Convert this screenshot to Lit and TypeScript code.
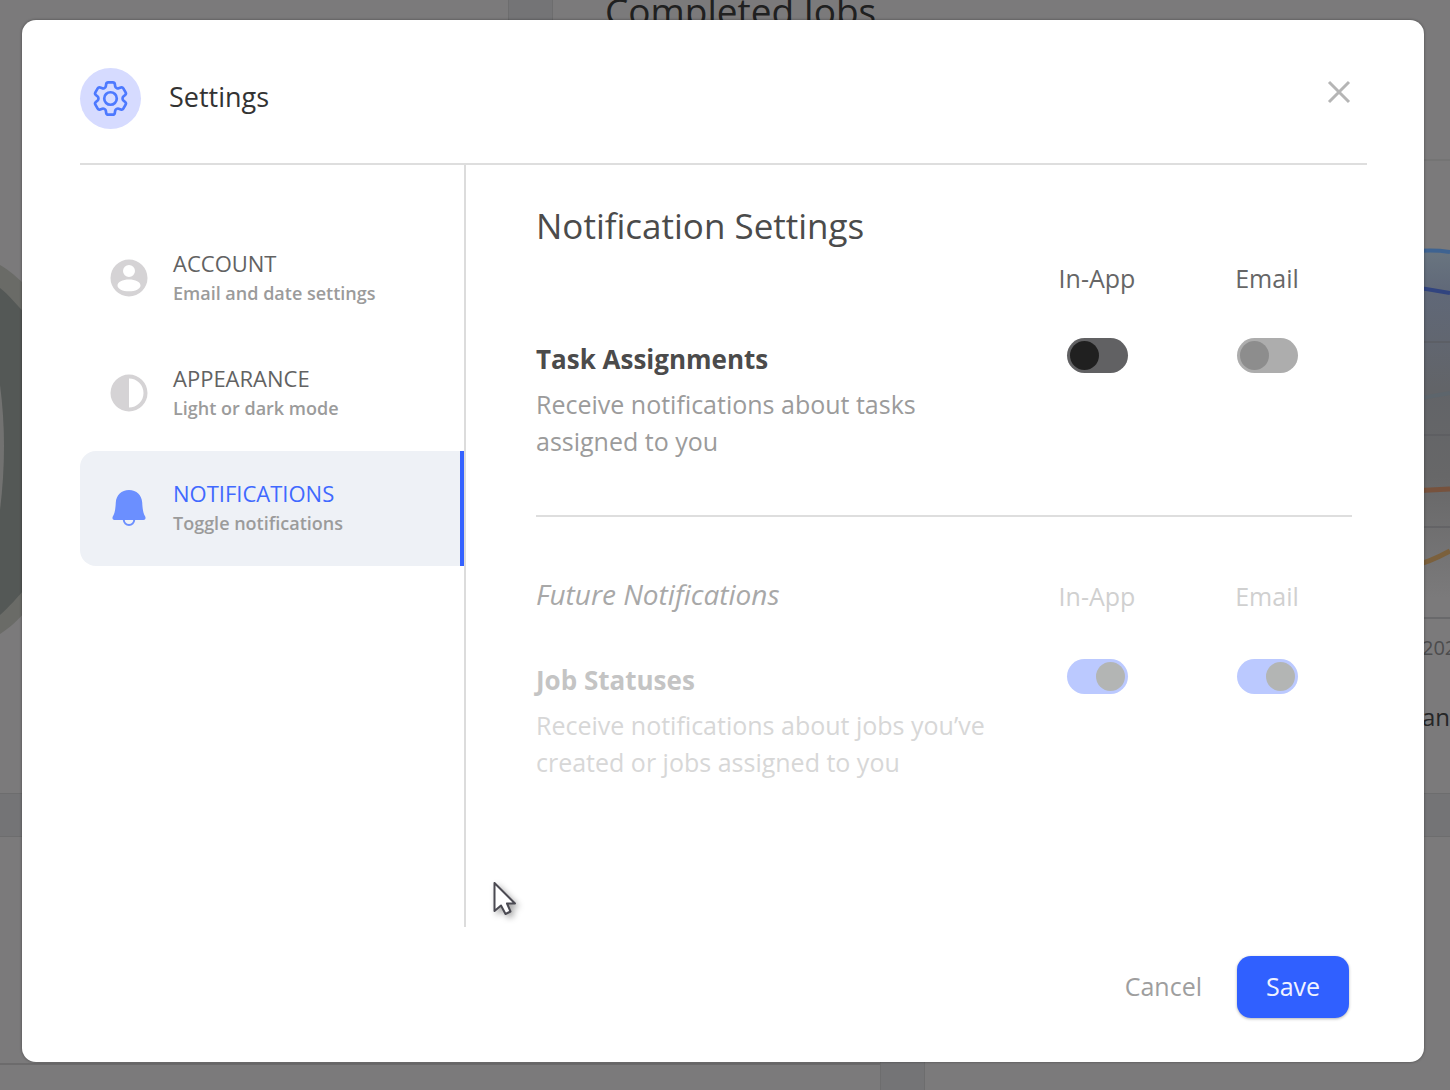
import { LitElement, html, css, svg, nothing } from "lit";
import { customElement, property } from "lit/decorators.js";
import { classMap } from "lit/directives/class-map.js";

interface NavEntry {
  id: string;
  title: string;
  hint: string;
}

const NAV: NavEntry[] = [
  { id: "account", title: "ACCOUNT", hint: "Email and date settings" },
  { id: "appearance", title: "APPEARANCE", hint: "Light or dark mode" },
  { id: "notifications", title: "NOTIFICATIONS", hint: "Toggle notifications" },
];

const NAV_ICONS: Record<string, unknown> = {
  account: svg`<path fill-rule="evenodd" d="M19 0.500a18.500 18.500 0 1 0 0 37a18.500 18.500 0 1 0 0-37zM19 6a6 6 0 1 1 0 12a6 6 0 1 1 0-12zM19 20.500c6.400 0 11.500 2.500 11.500 5.900c0 3.200-5.100 5.900-11.500 5.900s-11.500-2.700-11.500-5.900c0-3.400 5.100-5.900 11.500-5.900z"/>`,
  appearance: svg`<path fill-rule="evenodd" d="M19 0.500a18.500 18.500 0 1 0 0 37a18.500 18.500 0 1 0 0-37zM19 4.500a14.500 14.500 0 0 1 0 29z"/>`,
  notifications: svg`<path d="M19 1c7.600 0 12.700 5 13.200 12.600c0.400 7 1 10.800 3 14c0.900 2-0.100 3.400-1.700 3.400H4.500c-1.600 0-2.600-1.400-1.700-3.400c2-3.200 2.600-7 3-14C6.300 6 11.400 1 19 1z"/><path d="M13.700 30.500c0.200 3.400 2.600 5.400 5.300 5.400s5.100-2 5.300-5.400" fill="none" stroke="currentColor" stroke-width="2"/>`,
};

/** The dimmed dashboard that shows round the edges of the dialog. */
@customElement("dashboard-backdrop")
export class DashboardBackdrop extends LitElement {
  static styles = css`
    :host {
      position: absolute;
      inset: 0;
      overflow: hidden;
      display: flex;
      flex-direction: column;
      gap: 44px;
      background: #747476;
      font-family: "Open Sans", "Noto Sans", sans-serif;
    }
    .row {
      display: grid;
      gap: 45px;
      min-height: 0;
    }
    .upper {
      flex: 793 0 0;
      grid-template-columns: 508px 1fr;
    }
    .lower {
      flex: 253 0 0;
      grid-template-columns: 880px 1fr;
    }
    .card {
      background: #7b7a7b;
      outline: 1px solid #6d6d6e;
      overflow: hidden;
      position: relative;
    }
    .heading {
      margin: 0;
      padding-left: 52px;
      margin-top: -12px;
      font-size: 37px;
      line-height: 46px;
      font-weight: 400;
      color: #1f2020;
    }
    .donut {
      position: absolute;
      left: 0;
      top: 250px;
    }
    .chart {
      position: absolute;
      right: 0;
      top: 150px;
    }
    .tick,
    .legend {
      position: absolute;
      right: 0;
    }
    .tick {
      top: 634px;
      width: 28px;
      font-size: 20px;
      line-height: 28px;
      color: #4c4c4d;
    }
    .legend {
      top: 700px;
      width: 28px;
      font-size: 24px;
      line-height: 34px;
      color: #252627;
    }
    .rule {
      margin-top: 226px;
      border-top: 2px solid #6c6b6c;
    }
  `;

  render() {
    return html`
      <div class="row upper">
        <div class="card">
          <svg class="donut" width="30" height="400" viewBox="0 250 30 400" aria-hidden="true">
            <path d="M0 265C9 270 17 277 30 290V606C17 622 9 628 0 634z" fill="#6a6b67" />
            <path d="M0 288C9 295 17 305 30 319V583C17 598 9 607 0 615z" fill="#545856" />
            <path d="M0 385Q8 445 0 510z" fill="#727271" />
          </svg>
        </div>
        <div class="card">
          <h2 class="heading">Completed Jobs</h2>
          <svg class="chart" width="40" height="480" viewBox="0 150 40 480" aria-hidden="true">
            <defs>
              <linearGradient id="area" x1="0" y1="0" x2="0" y2="1">
                <stop offset="0" stop-color="#697580" />
                <stop offset="0.120" stop-color="#606878" />
                <stop offset="0.400" stop-color="#626468" />
                <stop offset="0.650" stop-color="#676768" />
                <stop offset="1" stop-color="#7b7a7b" />
              </linearGradient>
            </defs>
            <path d="M0 160H40" stroke="#6f6e6f" stroke-width="1" />
            <path d="M0 251H40V598H0z" fill="url(#area)" />
            <path d="M0 342H40M0 435H40M0 527H40M0 618H40" stroke="#58595c" stroke-width="1" />
            <path d="M0 252Q20 249 40 252" fill="none" stroke="#3e6391" stroke-width="4" />
            <path d="M0 287Q20 289 40 293" fill="none" stroke="#31447f" stroke-width="4" />
            <path d="M0 400L40 393" stroke="#5d656c" stroke-width="4" />
            <path d="M0 491L40 489" stroke="#77523d" stroke-width="5" />
            <path d="M0 567Q18 563 40 551" fill="none" stroke="#7b603c" stroke-width="5" />
          </svg>
          <span class="tick">202</span>
          <span class="legend">an</span>
        </div>
      </div>
      <div class="row lower">
        <div class="card"><div class="rule"></div></div>
        <div class="card"></div>
      </div>
    `;
  }
}

/** On/off switch built on a native checkbox. */
@customElement("toggle-switch")
export class ToggleSwitch extends LitElement {
  @property() name = "";
  @property() tone = "dark";
  @property({ type: Boolean }) on = false;
  @property({ type: Boolean }) locked = false;

  static styles = css`
    :host {
      display: flex;
    }
    .switch {
      appearance: none;
      display: flex;
      align-items: center;
      box-sizing: border-box;
      width: 61px;
      height: 35px;
      margin: 0;
      padding: 3px;
      border-radius: 18px;
      background: #616163;
      cursor: pointer;
    }
    .switch::before {
      content: "";
      width: 29px;
      height: 29px;
      border-radius: 50%;
      background: #202020;
    }
    .switch.muted {
      background: #adadad;
    }
    .switch.muted::before {
      background: #8d8d8d;
    }
    .switch:checked {
      justify-content: flex-end;
      background: #bbc9ff;
    }
    .switch:checked::before {
      background: #b3b5b4;
    }
  `;

  render() {
    return html`<input
      type="checkbox"
      role="switch"
      class=${classMap({ switch: true, muted: this.tone === "muted" })}
      aria-label=${this.name}
      .checked=${this.on}
      ?disabled=${this.locked}
    />`;
  }
}

@customElement("app-root")
export class AppRoot extends LitElement {
  static styles = css`
    :host {
      display: block;
      position: relative;
      min-height: 100vh;
      font-family: "Open Sans", "Noto Sans", sans-serif;
      font-size: 25px;
      color: #4a4a4a;
    }
    h1,
    h2,
    h3,
    p {
      margin: 0;
    }
    button {
      font: inherit;
      border: 0;
      background: none;
      padding: 0;
      cursor: pointer;
    }
    .overlay {
      position: relative;
      display: flex;
      box-sizing: border-box;
      min-height: 100vh;
      padding: 20px 26px 28px 22px;
    }
    .dialog {
      flex: 1;
      display: flex;
      flex-direction: column;
      box-sizing: border-box;
      padding: 48px 57px 44px 58px;
      border-radius: 14px;
      background: #fff;
      box-shadow: 0 0 3px rgba(0, 0, 0, 0.4);
    }
    .header {
      display: flex;
      align-items: center;
      gap: 28px;
      padding-bottom: 34px;
      border-bottom: 2px solid #dedede;
    }
    .badge {
      display: grid;
      place-items: center;
      width: 61px;
      height: 61px;
      border-radius: 50%;
      background: #d6dbff;
    }
    .title {
      flex: 1;
      padding-bottom: 4px;
      font-size: 27px;
      line-height: 36px;
      font-weight: 500;
      color: #333;
    }
    .close {
      display: grid;
      place-items: center;
      width: 32px;
      height: 32px;
      margin: 0 12px 14px 0;
      color: #b5b5b5;
    }
    .body {
      flex: 1;
      display: grid;
      grid-template-columns: 386px 1fr;
    }
    .nav {
      padding-top: 56px;
      border-right: 2px solid #dcdcdc;
    }
    .item {
      display: flex;
      align-items: center;
      box-sizing: border-box;
      width: 100%;
      height: 115px;
      gap: 25px;
      padding: 0 0 2px 30px;
      text-align: left;
      border-radius: 16px 0 0 16px;
    }
    .item.active {
      background: #eef1f6;
      border-right: 4px solid #3562ff;
    }
    .icon {
      width: 38px;
      height: 38px;
      fill: currentColor;
      color: #d5d3d5;
    }
    .active .icon {
      color: #6b8fff;
    }
    .label {
      display: flex;
      flex-direction: column;
    }
    .name {
      font-size: 22px;
      line-height: 30px;
      color: #626262;
    }
    .active .name {
      color: #4069ff;
    }
    .hint {
      font-size: 18px;
      line-height: 30px;
      font-weight: 600;
      color: #9b9b9b;
    }
    .content {
      padding: 37px 15px 0 70px;
    }
    .heading {
      font-size: 35px;
      line-height: 48px;
      font-weight: 400;
      color: #4b4b4b;
    }
    .group {
      display: grid;
      grid-template-columns: 1fr 170px 170px;
      row-gap: 43px;
      justify-items: center;
      padding-top: 11px;
    }
    .column {
      line-height: 34px;
      font-weight: 500;
      color: #666;
    }
    .lead,
    .setting {
      justify-self: start;
    }
    .setting {
      padding-top: 3px;
    }
    .subject {
      font-size: 26px;
      line-height: 36px;
      font-weight: 700;
      color: #4b4b4b;
    }
    .detail {
      max-width: 470px;
      padding-top: 9px;
      line-height: 37px;
      color: #9b9b9b;
    }
    .brief {
      max-width: 420px;
    }
    .lead {
      font-size: 28px;
      line-height: 30px;
      font-style: italic;
      font-weight: 400;
      color: #a8a8a8;
    }
    .future {
      row-gap: 46px;
      margin-top: 55px;
      padding-top: 62px;
      border-top: 2px solid #dedede;
    }
    .future .column {
      color: #d0d0d0;
    }
    .future .subject {
      color: #c4c4c4;
    }
    .future .detail {
      color: #d7d7d7;
    }
    .footer {
      display: flex;
      justify-content: flex-end;
      align-items: center;
      gap: 35px;
      padding: 29px 18px 0 0;
    }
    .cancel {
      padding-bottom: 2px;
      color: #9e9e9e;
    }
    .save {
      width: 112px;
      height: 62px;
      padding-bottom: 2px;
      border-radius: 14px;
      background: #3060ff;
      color: #f0f3ff;
      font-weight: 500;
      box-shadow: 0 1px 3px rgba(0, 0, 0, 0.3);
    }
    .pointer {
      position: absolute;
      left: 490px;
      top: 878px;
      filter: drop-shadow(3px 3px 3px rgba(0, 0, 0, 0.35));
    }
  `;

  private navItem(entry: NavEntry) {
    const active = entry.id === "notifications";
    return html`<button
      type="button"
      class=${classMap({ item: true, active })}
      aria-current=${active ? "page" : nothing}
    >
      <svg class="icon" viewBox="0 0 38 38" aria-hidden="true">${NAV_ICONS[entry.id]}</svg>
      <span class="label">
        <span class="name">${entry.title}</span>
        <span class="hint">${entry.hint}</span>
      </span>
    </button>`;
  }

  render() {
    return html`
      <dashboard-backdrop></dashboard-backdrop>
      <div class="overlay">
        <section class="dialog" role="dialog" aria-labelledby="title">
          <header class="header">
            <span class="badge">
              <svg width="43" height="43" viewBox="0 0 24 24" fill="none" stroke="#4d79ff" stroke-width="1.500" stroke-linecap="round" stroke-linejoin="round" aria-hidden="true">
                <path d="M9.594 3.940c.090-.542.560-.940 1.110-.940h2.593c.550 0 1.020.398 1.110.940l.213 1.281c.063.374.313.686.645.870.074.040.147.083.220.127.325.196.720.257 1.075.124l1.217-.456a1.125 1.125 0 0 1 1.370.490l1.296 2.247a1.125 1.125 0 0 1-.260 1.431l-1.003.827c-.293.241-.438.613-.430.992a7.723 7.723 0 0 1 0 .255c-.008.378.137.750.430.991l1.004.827c.424.350.534.955.260 1.430l-1.298 2.247a1.125 1.125 0 0 1-1.369.491l-1.217-.456c-.355-.133-.750-.072-1.076.124a6.470 6.470 0 0 1-.220.128c-.331.183-.581.495-.644.869l-.213 1.281c-.090.543-.560.940-1.110.940h-2.594c-.550 0-1.019-.398-1.110-.940l-.213-1.281c-.062-.374-.312-.686-.644-.870a6.520 6.520 0 0 1-.220-.127c-.325-.196-.720-.257-1.076-.124l-1.217.456a1.125 1.125 0 0 1-1.369-.490l-1.297-2.247a1.125 1.125 0 0 1 .260-1.431l1.004-.827c.292-.240.437-.613.430-.991a6.932 6.932 0 0 1 0-.255c.007-.380-.138-.751-.430-.992l-1.004-.827a1.125 1.125 0 0 1-.260-1.430l1.297-2.247a1.125 1.125 0 0 1 1.370-.491l1.216.456c.356.133.751.072 1.076-.124.072-.044.146-.086.220-.128.332-.183.582-.495.644-.869l.214-1.280Z" />
                <circle cx="12" cy="12" r="3.500" />
              </svg>
            </span>
            <h1 class="title" id="title">Settings</h1>
            <button class="close" type="button" aria-label="Close">
              <svg width="24" height="24" viewBox="0 0 24 24" fill="none" stroke="currentColor" stroke-width="3" aria-hidden="true">
                <path d="M2 2L22 22M22 2L2 22" />
              </svg>
            </button>
          </header>
          <div class="body">
            <nav class="nav" aria-label="Settings sections">${NAV.map((entry) => this.navItem(entry))}</nav>
            <div class="content">
              <h2 class="heading">Notification Settings</h2>
              <div class="group">
                <span></span>
                <span class="column">In-App</span>
                <span class="column">Email</span>
                <div class="setting">
                  <h3 class="subject">Task Assignments</h3>
                  <p class="detail brief">Receive notifications about tasks assigned to you</p>
                </div>
                <toggle-switch name="Task Assignments, In-App"></toggle-switch>
                <toggle-switch name="Task Assignments, Email" tone="muted"></toggle-switch>
              </div>
              <div class="group future">
                <h2 class="lead">Future Notifications</h2>
                <span class="column">In-App</span>
                <span class="column">Email</span>
                <div class="setting">
                  <h3 class="subject">Job Statuses</h3>
                  <p class="detail">Receive notifications about jobs you’ve created or jobs assigned to you</p>
                </div>
                <toggle-switch name="Job Statuses, In-App" on locked></toggle-switch>
                <toggle-switch name="Job Statuses, Email" on locked></toggle-switch>
              </div>
            </div>
          </div>
          <footer class="footer">
            <button class="cancel" type="button">Cancel</button>
            <button class="save" type="button">Save</button>
          </footer>
        </section>
      </div>
      <svg class="pointer" width="32" height="40" viewBox="0 0 32 40" aria-hidden="true">
        <path d="M4.500 5V33L11 27.500L15.500 36L20.500 33.500L17 25.500H25z" fill="#fff" stroke="#4b4a52" stroke-width="2" stroke-linejoin="round" />
      </svg>
    `;
  }
}
